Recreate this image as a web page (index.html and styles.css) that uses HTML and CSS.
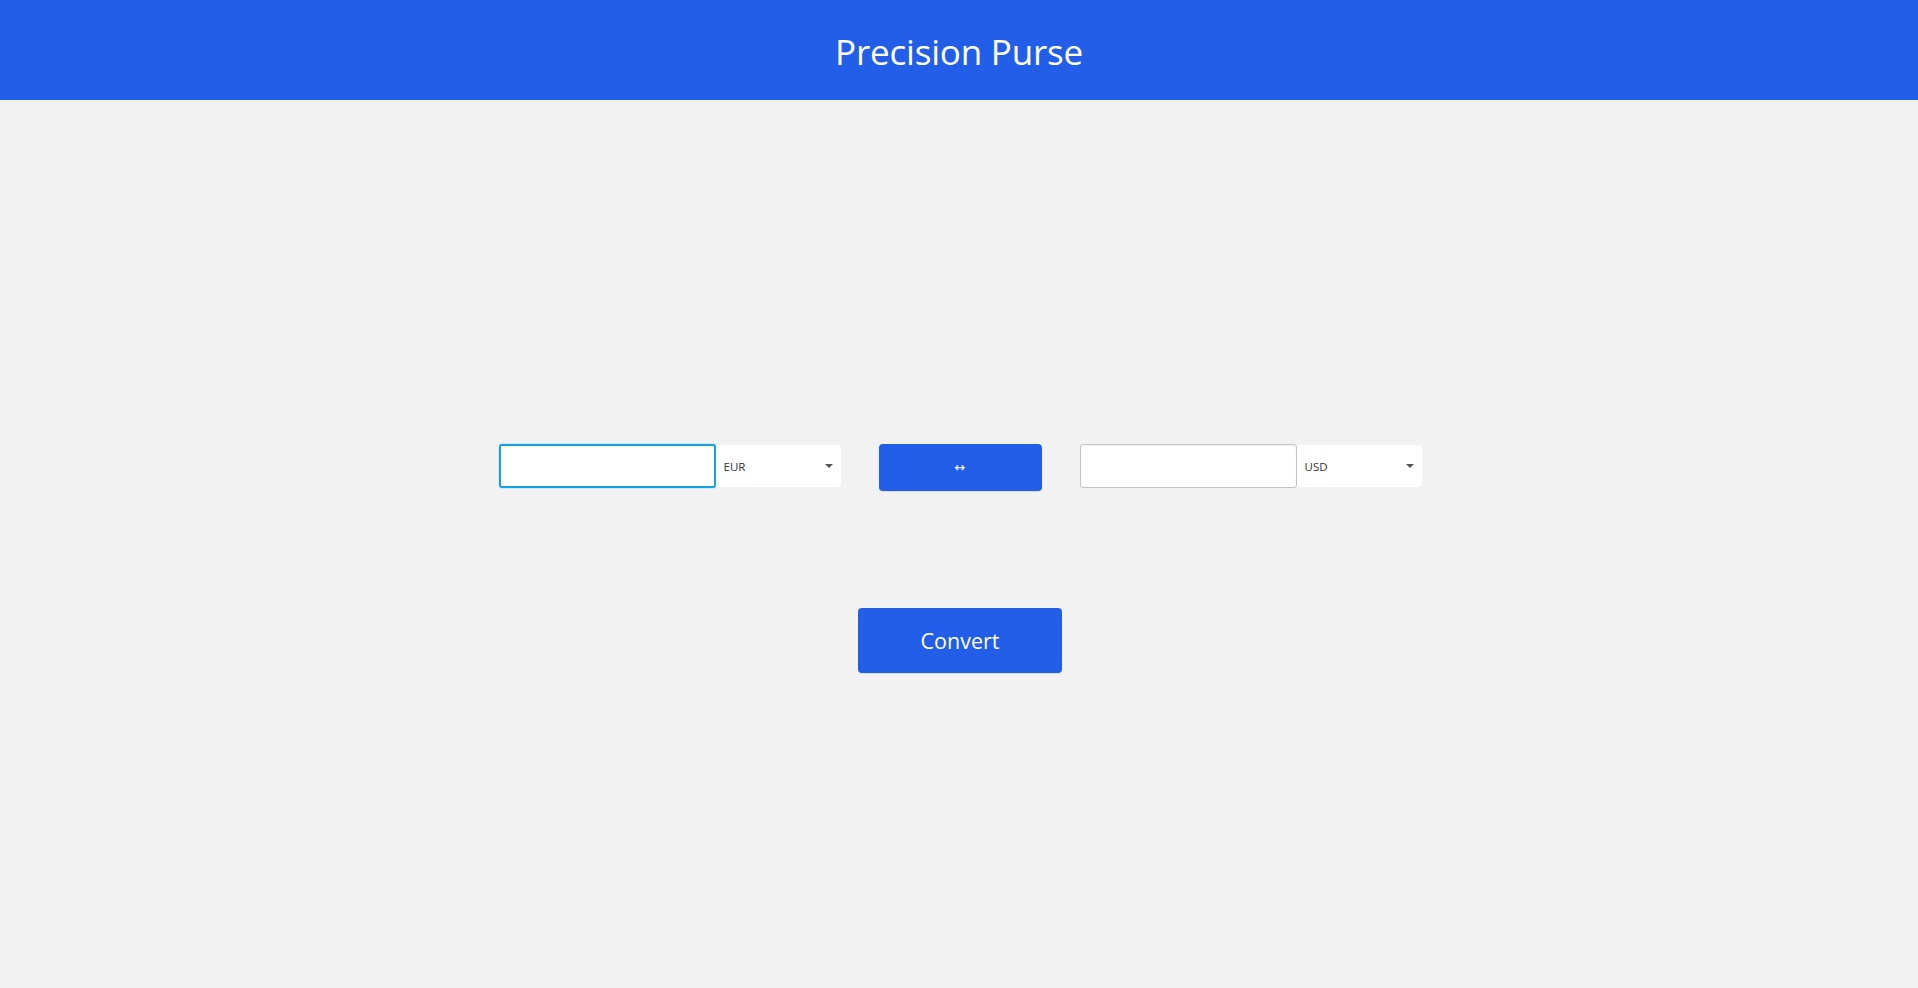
FILE: index.html
```html
<!DOCTYPE html>
<html lang="en">
<head>
<meta charset="utf-8">
<title>Precision Purse</title>
<link rel="stylesheet" href="styles.css">
</head>
<body>
<header class="topbar">
  <h1 class="title">Precision Purse</h1>
</header>
<main class="converter">
  <div class="row">
    <div class="field">
      <input class="amount amount-focus" type="text" aria-label="Amount from">
      <div class="currency">
        <span class="code">EUR</span>
        <svg class="caret" width="8" height="4" viewBox="0 0 8 4"><path d="M0 0H8L4 4Z" fill="#555"/></svg>
      </div>
    </div>
    <button class="swap" type="button">↔</button>
    <div class="field">
      <input class="amount" type="text" aria-label="Amount to">
      <div class="currency">
        <span class="code">USD</span>
        <svg class="caret" width="8" height="4" viewBox="0 0 8 4"><path d="M0 0H8L4 4Z" fill="#555"/></svg>
      </div>
    </div>
  </div>
  <button class="convert" type="button">Convert</button>
</main>
</body>
</html>
```
FILE: styles.css
```css
* { box-sizing: border-box; }
html, body { margin: 0; padding: 0; }
body {
  background: #f2f2f2;
  font-family: "Open Sans", "Noto Sans", sans-serif;
  min-height: 988px;
}
.topbar {
  height: 100px;
  background: #225ee8;
  display: flex;
  align-items: center;
  justify-content: center;
}
.title {
  margin: 0;
  color: #fff;
  font-weight: 400;
  font-size: 35px;
  letter-spacing: -0.2px;
  line-height: 1;
  padding-top: 3px;
}
.converter {
  display: flex;
  flex-direction: column;
  align-items: center;
  padding-top: 344px;
}
.row {
  display: flex;
  align-items: flex-start;
  gap: 38px;
  margin-left: 2px;
}
.field {
  display: flex;
  align-items: flex-start;
}
.amount {
  width: 217px;
  height: 44px;
  border: 1px solid #c4c4c4;
  border-radius: 3px;
  background: #fff;
  margin: 0;
  padding: 0 8px;
  box-shadow: inset 0 1px 2px rgba(0,0,0,0.06);
  outline: none;
  font-family: inherit;
}
.amount-focus {
  border: 2px solid #16a0e0;
  box-shadow: 0 0 0 1px #cde9f7;
}
.currency {
  width: 125px;
  height: 42px;
  margin-top: 1px;
  background: #fff;
  border-radius: 0 4px 4px 0;
  display: flex;
  align-items: center;
  justify-content: space-between;
  padding: 0 8px 0 8px;
}
.code {
  font-size: 11.5px;
  color: #333;
  padding-top: 1px;
}
.swap {
  width: 163px;
  height: 47px;
  background: #225ee8;
  border: none;
  border-radius: 4px;
  color: #fff;
  font-size: 13px;
  font-family: "DejaVu Sans", sans-serif;
  margin: 0;
  padding: 0;
  box-shadow: 0 1px 1px rgba(0,0,0,0.1);
}
.convert {
  margin-top: 117px;
  margin-left: 2px;
  width: 204px;
  height: 65px;
  background: #225ee8;
  border: none;
  border-radius: 4px;
  color: #fff;
  font-family: inherit;
  font-size: 21.5px;
  padding: 0;
  box-shadow: 0 1px 1px rgba(0,0,0,0.1);
}
```
